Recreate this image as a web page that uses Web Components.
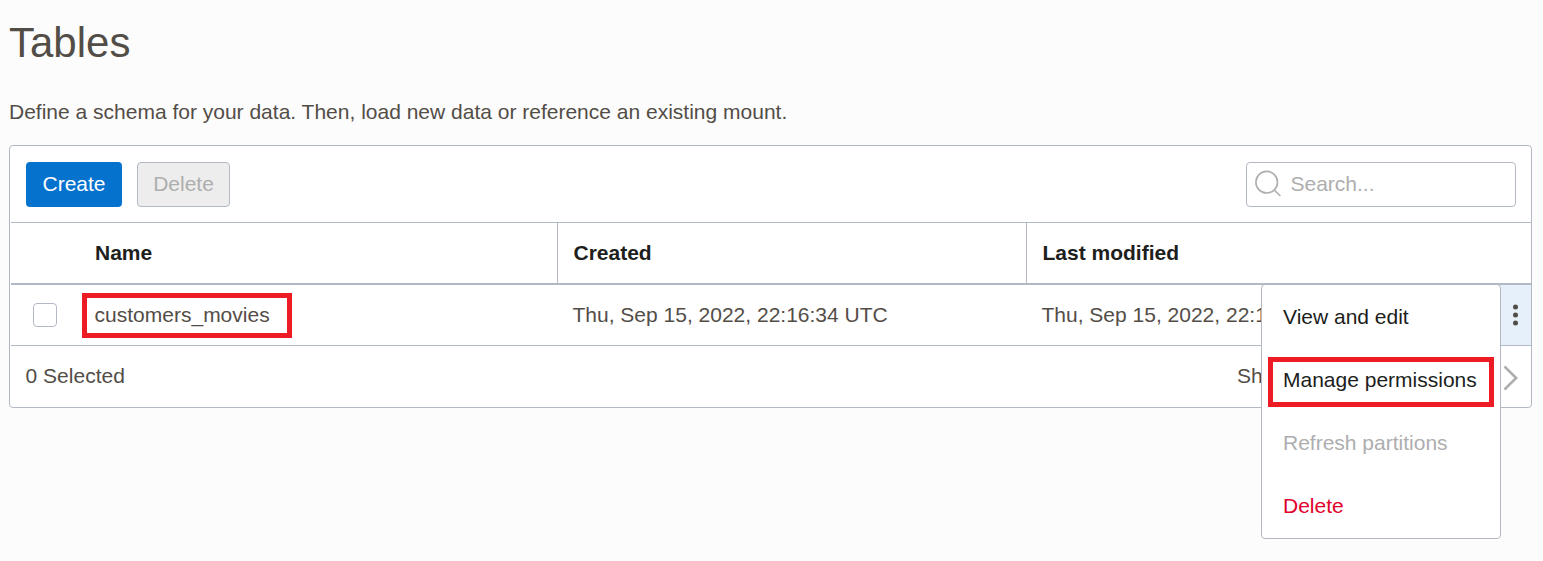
<!DOCTYPE html>
<html lang="en">
<head>
<meta charset="utf-8">
<title>Tables</title>
<style>
html,body{margin:0;height:100%}
body{background:#fcfcfc;font:21px/24px "Liberation Sans",Arial,sans-serif;color:#534d47;overflow:hidden}
</style>
</head>
<body>
<tables-page></tables-page>
<script>
const define = (name, css, html) => {
  const template = document.createElement('template');
  template.innerHTML = `<style>*{box-sizing:border-box}${css}</style>${html}`;
  customElements.define(name, class extends HTMLElement {
    constructor() {
      super();
      this.attachShadow({mode: 'open'}).append(template.content.cloneNode(true));
    }
  });
};

define('app-button', `
:host{display:inline-flex;align-items:center;justify-content:center;box-sizing:border-box;height:45px;width:96px;border-radius:4px;background:#0572ce;color:#fff;white-space:nowrap}
:host([disabled]){width:93px;background:#ededed;color:#aeaeae;border:1px solid #b3b9c4}`, `<span><slot></slot></span>`);

define('search-box', `
:host{display:flex;align-items:center;box-sizing:border-box;width:270px;height:45px;border:1px solid #b3b9c4;border-radius:4px;background:#fff;color:#aeaeae;padding-left:8px}
svg{display:block;margin-right:8.5px}`, `
<svg width="27" height="28" viewBox="0 0 27 28" fill="none" stroke="#aeaeae" stroke-width="1.6"><circle cx="11.7" cy="12.2" r="10.8"/><path d="M19.2 20l6.2 6"/></svg><span><slot></slot></span>`);

define('check-box', `
:host{display:block;box-sizing:border-box;width:24px;height:24px;border:1px solid #b3b9c4;border-radius:4px;background:#fff}`, ``);

define('highlight-box', `
:host{display:flex;align-items:center;box-sizing:border-box;border:5px solid #ed1c24}`, `<slot></slot>`);

define('data-grid', `
:host{display:block;margin-left:1px}
.row{display:grid;grid-template-columns:71px 476px 469px 1fr 31px;align-items:stretch;height:61px;border-bottom:1px solid #b3b9c4}
.row>div{display:flex;align-items:center;white-space:nowrap;min-width:0}
.head{height:62px;border-bottom-width:2px;color:#201e1c;font-weight:bold}
.head>div{padding-bottom:1px}
.head>.name{border-right:1px solid #b3b9c4;padding-left:13px}
.row>.date{padding-left:14.5px}
.head>.date{padding-left:15.5px}
.head>.sep{border-right:1px solid #b3b9c4}
.pick{padding-left:22px}
highlight-box{width:210px;height:45px;padding-left:7.6px}
.actions{background:#e5f0fa;justify-content:center}
svg{display:block;margin-top:-1px}`, `
<div class="row head"><div></div><div class="name">Name</div><div class="date sep">Created</div><div class="date">Last modified</div><div></div></div>
<div class="row"><div class="pick"><check-box></check-box></div><div><highlight-box>customers_movies</highlight-box></div><div class="date">Thu, Sep 15, 2022, 22:16:34 UTC</div><div class="date">Thu, Sep 15, 2022, 22:1</div>
<div class="actions"><svg width="7" height="24" fill="#534d47"><circle cx="3.5" cy="4" r="2.5"/><circle cx="3.5" cy="12" r="2.5"/><circle cx="3.5" cy="20" r="2.5"/></svg></div></div>`);

define('table-panel', `
:host{display:block;box-sizing:border-box;width:1523px;height:263px;border:1px solid #b3b9c4;border-radius:4px;background:#fff}
.bar{display:flex;align-items:center;gap:15px;height:77px;border-bottom:1px solid #b3b9c4;margin-left:1px;padding:0 15px 0 15px}
search-box{margin-left:auto}
footer{display:flex;align-items:center;height:61px;padding:0 13px 0 15.6px}
footer span{margin-top:-2px}.count{margin-left:auto;width:266px}
svg{display:block;margin-top:3px}`, `
<div class="bar"><app-button>Create</app-button><app-button disabled>Delete</app-button><search-box>Search...</search-box></div>
<data-grid></data-grid>
<footer><span>0 Selected</span><span class="count">Sh</span><svg width="15" height="26" fill="none" stroke="#aeaeae" stroke-width="2.6"><path d="M1.5 1.5L13.2 13 1.5 24.5"/></svg></footer>`);

define('menu-item', `
:host{display:flex;align-items:center;box-sizing:border-box;height:63px;padding-left:21px;color:#201e1c;white-space:nowrap}
:host([disabled]){color:#aeaeae}
:host([danger]){color:#e0002b}`, `<slot></slot>`);

define('action-menu', `
:host{display:block;box-sizing:border-box;width:240px;height:255px;border:1px solid #b3b9c4;border-radius:4px;background:#fff}
.marked{padding:9px 6px 4px;height:63px}
highlight-box{height:50px}
highlight-box menu-item{padding-left:10px;height:40px;padding-bottom:4px}`, `
<menu-item>View and edit</menu-item>
<div class="marked"><highlight-box><menu-item>Manage permissions</menu-item></highlight-box></div>
<menu-item disabled>Refresh partitions</menu-item>
<menu-item danger>Delete</menu-item>`);

define('tables-page', `
:host{display:block;position:relative;height:561px;padding-left:9px;box-sizing:border-box}
h1{margin:0;padding-top:19px;font-size:42px;line-height:48px;font-weight:400}
p{margin:33px 0 21px;line-height:24px}
action-menu{position:absolute;left:1261px;top:284px}`, `
<h1>Tables</h1>
<p>Define a schema for your data. Then, load new data or reference an existing mount.</p>
<table-panel></table-panel>
<action-menu></action-menu>`);
</script>
</body>
</html>
